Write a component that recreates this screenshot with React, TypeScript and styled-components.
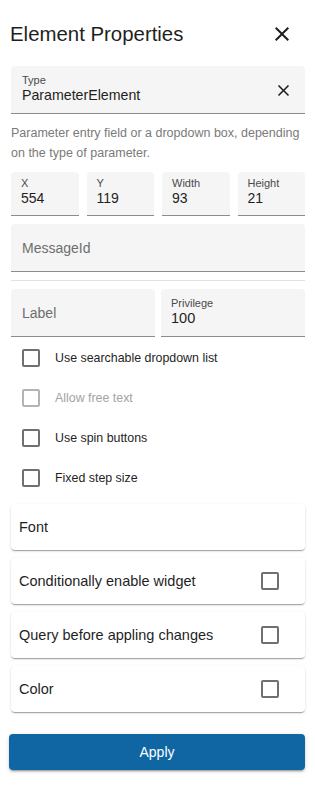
import React from "react";
import styled, { createGlobalStyle } from "styled-components";

const Global = createGlobalStyle`
  html, body { margin: 0; padding: 0; background: #ffffff; }
  body { font-family: "Liberation Sans", Arial, sans-serif; color: #1f1f1f; }
  * { box-sizing: border-box; }
`;

const Panel = styled.div`
  width: 315px;
  padding: 16px 10px 16px 11px;
  display: flex;
  flex-direction: column;
`;

const Header = styled.div`
  height: 36px;
  display: flex;
  align-items: center;
  justify-content: space-between;
`;

const Title = styled.h1`
  margin: 0 0 0 -1px;
  font-size: 20.4px;
  font-weight: 400;
  line-height: 24px;
  color: #1f1f1f;
`;

const IconButton = styled.button<{ $size: number; $mr?: number }>`
  border: 0;
  background: transparent;
  padding: 0;
  width: ${(p) => p.$size}px;
  height: ${(p) => p.$size}px;
  margin-right: ${(p) => p.$mr ?? 0}px;
  display: flex;
  align-items: center;
  justify-content: center;
  color: #1f1f1f;
  cursor: pointer;
  svg { width: 100%; height: 100%; display: block; }
`;

const Field = styled.div<{ $h: number; $pt: number; $pl?: number; $center?: boolean }>`
  position: relative;
  height: ${(p) => p.$h}px;
  background: #f5f5f5;
  border-radius: 4px 4px 0 0;
  border-bottom: 1px solid #8c8c8c;
  padding: ${(p) => p.$pt}px 10px 0 ${(p) => p.$pl ?? 10}px;
  display: flex;
  flex-direction: column;
  justify-content: ${(p) => (p.$center ? "center" : "flex-start")};
  ${(p) => (p.$center ? "padding-top: 0;" : "")}
  min-width: 0;
`;

const FieldLabel = styled.span`
  font-size: 11px;
  line-height: 13px;
  color: #4a4a4a;
`;

const FieldValue = styled.span<{ $fs: number }>`
  font-size: ${(p) => p.$fs}px;
  line-height: 17px;
  color: #1f1f1f;
`;

const Placeholder = styled.span`
  font-size: 14px;
  line-height: 18px;
  color: #6e6e6e;
`;

const ClearSlot = styled.div`
  position: absolute;
  right: 12px;
  top: 15px;
`;

const Description = styled.p`
  margin: 9px 0 9px 0;
  font-size: 12.5px;
  line-height: 20px;
  color: #7a7a7a;
  white-space: nowrap;
`;

const Row4 = styled.div`
  display: grid;
  grid-template-columns: repeat(4, 1fr);
  gap: 8px;
`;

const Row2 = styled.div`
  display: grid;
  grid-template-columns: 1fr 1fr;
  gap: 6px;
`;

const Divider = styled.hr`
  border: 0;
  height: 1px;
  background: #e2e2e2;
  margin: 8px 0;
`;

const Spacer = styled.div<{ $h: number }>`
  height: ${(p) => p.$h}px;
`;

const CheckRow = styled.label<{ $disabled?: boolean }>`
  height: 40px;
  display: flex;
  align-items: center;
  padding-left: 11px;
  gap: 15px;
  font-size: 12.4px;
  color: ${(p) => (p.$disabled ? "#a3a3a3" : "#1f1f1f")};
`;

const Box = styled.span<{ $disabled?: boolean }>`
  width: 18px;
  height: 18px;
  flex: none;
  border: 2px solid ${(p) => (p.$disabled ? "#b4b4b4" : "#707070")};
  border-radius: 2px;
`;

const Cards = styled.div`
  margin-top: 6px;
  display: flex;
  flex-direction: column;
  gap: 8px;
`;

const Card = styled.div`
  height: 46px;
  background: #ffffff;
  border-radius: 4px;
  box-shadow: 0 2px 1px -1px rgba(0, 0, 0, 0.2), 0 1px 1px 0 rgba(0, 0, 0, 0.14),
    0 1px 3px 0 rgba(0, 0, 0, 0.12);
  display: flex;
  align-items: center;
  justify-content: space-between;
  padding: 0 26px 0 8px;
  font-size: 14.5px;
  color: #1f1f1f;
`;

const ApplyButton = styled.button`
  margin: 22px 0 0 -2px;
  height: 36px;
  width: 296px;
  border: 0;
  border-radius: 4px;
  background: #1066a3;
  color: #ffffff;
  font-family: "Liberation Sans", Arial, sans-serif;
  font-size: 14px;
  box-shadow: 0 3px 1px -2px rgba(0, 0, 0, 0.2), 0 2px 2px 0 rgba(0, 0, 0, 0.14),
    0 1px 5px 0 rgba(0, 0, 0, 0.12);
  cursor: pointer;
`;

const CloseIcon = () => (
  <svg viewBox="0 0 24 24" fill="currentColor" aria-hidden="true">
    <path d="M19 6.41 17.59 5 12 10.59 6.41 5 5 6.41 10.59 12 5 17.59 6.41 19 12 13.41 17.59 19 19 17.59 13.41 12z" />
  </svg>
);

const checks = [
  { label: "Use searchable dropdown list" },
  { label: "Allow free text", disabled: true },
  { label: "Use spin buttons" },
  { label: "Fixed step size" },
];

const cards = [
  { label: "Font", check: false },
  { label: "Conditionally enable widget", check: true },
  { label: "Query before appling changes", check: true },
  { label: "Color", check: true },
];

const geometry = [
  { label: "X", value: "554" },
  { label: "Y", value: "119" },
  { label: "Width", value: "93" },
  { label: "Height", value: "21" },
];

export default function App() {
  return (
    <>
      <Global />
      <Panel>
        <Header>
          <Title>Element Properties</Title>
          <IconButton $size={24} $mr={11} aria-label="close">
            <CloseIcon />
          </IconButton>
        </Header>
        <Spacer $h={14} />
        <Field $h={48} $pt={8} $pl={11}>
          <FieldLabel>Type</FieldLabel>
          <FieldValue $fs={14.2}>ParameterElement</FieldValue>
          <ClearSlot>
            <IconButton $size={19} aria-label="clear">
              <CloseIcon />
            </IconButton>
          </ClearSlot>
        </Field>
        <Description>
          Parameter entry field or a dropdown box, depending
          <br />
          on the type of parameter.
        </Description>
        <Row4>
          {geometry.map((g) => (
            <Field key={g.label} $h={44} $pt={5}>
              <FieldLabel>{g.label}</FieldLabel>
              <FieldValue $fs={14}>{g.value}</FieldValue>
            </Field>
          ))}
        </Row4>
        <Spacer $h={8} />
        <Field $h={48} $pt={0} $pl={11} $center>
          <Placeholder>MessageId</Placeholder>
        </Field>
        <Divider />
        <Row2>
          <Field $h={48} $pt={0} $pl={11} $center>
            <Placeholder>Label</Placeholder>
          </Field>
          <Field $h={48} $pt={8}>
            <FieldLabel>Privilege</FieldLabel>
            <FieldValue $fs={14.5}>100</FieldValue>
          </Field>
        </Row2>
        <Spacer $h={1} />
        {checks.map((c) => (
          <CheckRow key={c.label} $disabled={c.disabled}>
            <Box $disabled={c.disabled} />
            {c.label}
          </CheckRow>
        ))}
        <Cards>
          {cards.map((c) => (
            <Card key={c.label}>
              <span>{c.label}</span>
              {c.check && <Box />}
            </Card>
          ))}
        </Cards>
        <ApplyButton>Apply</ApplyButton>
      </Panel>
    </>
  );
}
